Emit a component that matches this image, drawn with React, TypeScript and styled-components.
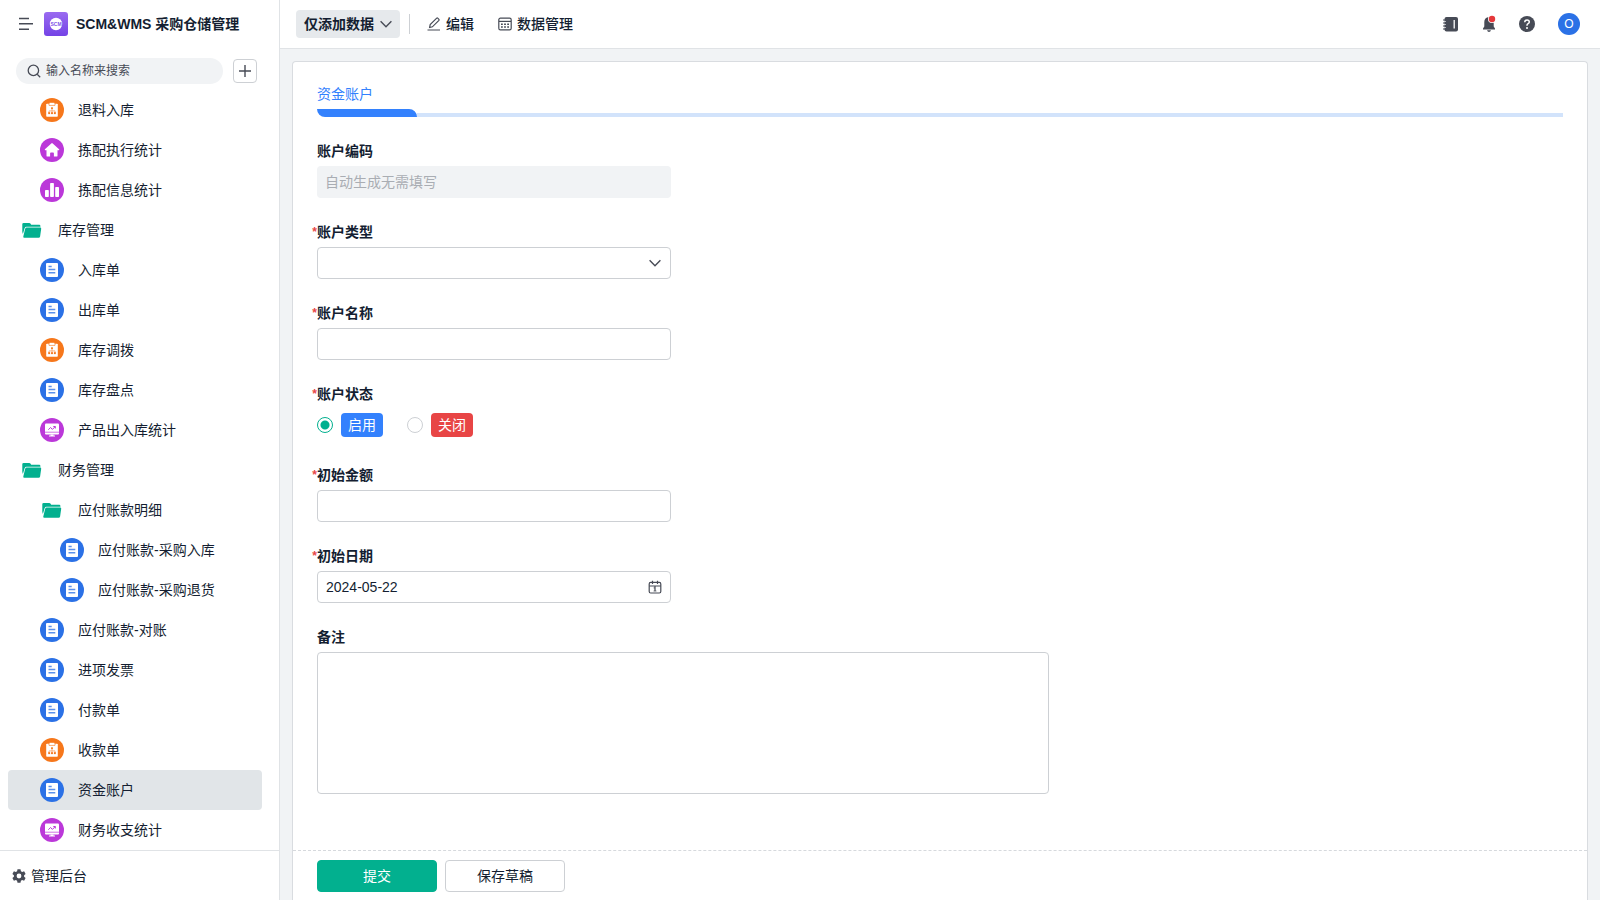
import React from "react";
import styled, { createGlobalStyle } from "styled-components";

const color = {
  text: "#141e31",
  icon: "#474b56",
  line: "#e0e3e6",
  control: "#cdd0d4",
  muted: "#f1f3f5",
  blue: "#3381fd",
  appBlue: "#2b71e6",
  green: "#02b08f",
  orange: "#f6771b",
  purple: "#bb38d9",
  red: "#e84545",
};

const GlobalStyle = createGlobalStyle`
  *, *::before, *::after { box-sizing: border-box; }
  body {
    margin: 0;
    background: ${color.muted};
    color: ${color.text};
    font: 14px/20px "Liberation Sans", "Noto Sans CJK SC", sans-serif;
  }
  button, input, select, textarea { font: inherit; color: inherit; margin: 0; }
  button { padding: 0; border: 0; background: none; cursor: pointer; }
  svg { display: block; flex: none; }
`;

const Page = styled.div`
  display: flex;
  height: 100vh;
`;

const Sidebar = styled.aside`
  display: flex;
  flex-direction: column;
  flex: none;
  width: 280px;
  background: #fff;
  border-right: 1px solid ${color.line};
`;

const Brand = styled.div`
  display: flex;
  align-items: center;
  gap: 8px;
  height: 48px;
  padding-left: 18px;
`;

const MenuButton = styled.button`
  width: 18px;
  height: 18px;
`;

const BrandName = styled.h1`
  margin: 0;
  font-size: 14px;
  font-weight: 600;
  white-space: nowrap;
`;

const SearchRow = styled.div`
  display: flex;
  align-items: center;
  gap: 10px;
  height: 42px;
  padding: 10px 22px 6px 16px;
`;

const SearchBox = styled.label`
  display: flex;
  flex: 1;
  align-items: center;
  gap: 5px;
  height: 26px;
  padding: 0 11px;
  border-radius: 13px;
  background: ${color.muted};
`;

const SearchInput = styled.input`
  flex: 1;
  min-width: 0;
  padding: 0;
  border: 0;
  outline: 0;
  background: none;
  font-size: 12px;
  line-height: 20px;
  &::placeholder { color: ${color.icon}; opacity: 1; }
`;

const AddButton = styled.button`
  display: grid;
  place-items: center;
  width: 24px;
  height: 24px;
  border: 1px solid ${color.control};
  border-radius: 4px;
`;

const Nav = styled.nav`
  flex: 1;
  min-height: 0;
  padding: 0 17px 0 8px;
  overflow-y: auto;
  scrollbar-width: none;
`;

const NavLink = styled.a<{ $level: number; $active?: boolean }>`
  display: flex;
  align-items: center;
  gap: 14px;
  height: 40px;
  padding-left: ${(p) => 12 + p.$level * 20}px;
  border-radius: 4px;
  background: ${(p) => (p.$active ? "#e1e5e8" : "transparent")};
  color: inherit;
  text-decoration: none;
  white-space: nowrap;
`;

const AdminLink = styled.a`
  display: flex;
  align-items: center;
  gap: 5px;
  height: 50px;
  padding-left: 12px;
  border-top: 1px solid ${color.line};
  color: inherit;
  text-decoration: none;
`;

const Content = styled.div`
  display: flex;
  flex: 1;
  flex-direction: column;
  min-width: 0;
`;

const TopBar = styled.header`
  display: flex;
  align-items: center;
  justify-content: space-between;
  height: 49px;
  flex: none;
  padding: 0 20px 0 16px;
  background: #fff;
  border-bottom: 1px solid ${color.line};
`;

const Group = styled.div<{ $gap: number }>`
  display: flex;
  align-items: center;
  gap: ${(p) => p.$gap}px;
`;

const ModeButton = styled.button`
  display: flex;
  align-items: center;
  justify-content: space-between;
  width: 104px;
  height: 28px;
  padding: 0 8px;
  border-radius: 4px;
  background: #e6e9ec;
  font-weight: 600;
`;

const Divider = styled.span`
  width: 1px;
  height: 20px;
  margin: 0 17px 0 9px;
  background: ${color.control};
`;

const ToolButton = styled.button`
  display: flex;
  align-items: center;
  gap: 5px;
  font-weight: 500;
`;

const Avatar = styled.button`
  width: 22px;
  height: 22px;
  border-radius: 50%;
  background: ${color.appBlue};
  color: #fff;
  font-size: 12px;
`;

const Card = styled.form`
  display: flex;
  flex: 1;
  flex-direction: column;
  min-height: 0;
  margin: 12px 12px 0;
  background: #fff;
  border: 1px solid #d9dce0;
  border-bottom: 0;
  border-radius: 4px 4px 0 0;
`;

const CardBody = styled.div`
  flex: 1;
  min-height: 0;
  padding: 20px 24px;
  overflow-y: auto;
`;

const SectionTitle = styled.h2`
  margin: 0 0 3px;
  color: ${color.blue};
  font-size: 14px;
  font-weight: 400;
  line-height: 24px;
`;

const SectionRule = styled.div`
  display: flex;
  align-items: flex-end;
  margin-bottom: 24px;
  &::before {
    content: "";
    width: 100px;
    height: 8px;
    border-radius: 0 8px 0 8px;
    background: ${color.blue};
  }
  &::after {
    content: "";
    flex: 1;
    height: 4px;
    background: #d2e3fb;
  }
`;

const Field = styled.div<{ $wide?: boolean }>`
  max-width: ${(p) => (p.$wide ? 732 : 354)}px;
  margin-bottom: 24px;
`;

const FieldLabel = styled.label<{ $required?: boolean }>`
  position: relative;
  display: block;
  margin-bottom: 4px;
  font-weight: 600;
  line-height: 21px;
  &::before {
    content: ${(p) => (p.$required ? '"*"' : "none")};
    position: absolute;
    right: 100%;
    color: ${color.red};
    font-size: 12px;
  }
`;

const ControlFrame = styled.div`
  display: grid;
  align-items: center;
  & > * { grid-area: 1 / 1; }
`;

const TextInput = styled.input`
  display: block;
  width: 100%;
  height: 32px;
  padding: 0 8px;
  border: 1px solid ${color.control};
  border-radius: 4px;
  background: #fff;
  outline: 0;
  &:disabled {
    border: 0;
    background: ${color.muted};
  }
  &::placeholder { color: #a9adb3; opacity: 1; }
`;

const SelectInput = styled.select`
  width: 100%;
  height: 32px;
  padding: 0 32px 0 8px;
  border: 1px solid ${color.control};
  border-radius: 4px;
  background: #fff;
  appearance: none;
`;

const TrailingIcon = styled.span`
  display: grid;
  place-items: center;
  justify-self: end;
  width: 16px;
  margin-right: 8px;
  pointer-events: none;
`;

const TextArea = styled.textarea`
  display: block;
  width: 100%;
  height: 142px;
  padding: 6px 8px;
  border: 1px solid ${color.control};
  border-radius: 4px;
  outline: 0;
  resize: none;
`;

const RadioRow = styled.div`
  display: flex;
  align-items: center;
  gap: 24px;
  height: 32px;
`;

const RadioOption = styled.label`
  display: flex;
  align-items: center;
  gap: 8px;
`;

const Radio = styled.input`
  appearance: none;
  width: 16px;
  height: 16px;
  border: 1px solid ${color.control};
  border-radius: 50%;
  &:checked {
    border-color: ${color.green};
    background: radial-gradient(circle, ${color.green} 4px, #fff 5px);
  }
`;

const Tag = styled.span<{ $color: string }>`
  padding: 0 7px;
  border-radius: 4px;
  background: ${(p) => p.$color};
  color: #fff;
  line-height: 24px;
`;

const Actions = styled.footer`
  display: flex;
  flex: none;
  gap: 8px;
  padding: 9px 24px 8px;
  border-top: 1px dashed #d6d9dd;
`;

const ActionButton = styled.button<{ $primary?: boolean }>`
  width: 120px;
  height: 32px;
  border: 1px solid ${(p) => (p.$primary ? color.green : color.control)};
  border-radius: 4px;
  background: ${(p) => (p.$primary ? color.green : "#fff")};
  color: ${(p) => (p.$primary ? "#fff" : color.text)};
`;

type IconName = "folder" | "doc" | "flow" | "home" | "bars" | "board";

const shapes: Record<IconName, React.ReactNode> = {
  folder: (
    <g fill={color.green}>
      <path d="M2.300 6.300q0-1.300 1.300-1.300H9.300q.7 0 1.100.6l.8 1.200h8q1.200 0 1.200 1.200v.8H6.500q-1.500 0-1.900 1.400L2.900 16l-.6-2z" />
      <path d="M6.700 9.600h13.400q1.300 0 1.100 1.200l-1.100 7.700q-.2 1.200-1.500 1.200H4.300q-1.300 0-1-1.200l1.800-7.600q.3-1.300 1.600-1.300z" />
    </g>
  ),
  doc: (
    <>
      <circle cx="12" cy="12" r="12" fill={color.appBlue} />
      <rect x="6" y="5" width="12" height="14" rx="1" fill="#fff" />
      <path d="M8.500 8.500h3.200M8.500 11.600h6.800M8.500 14.800h6.800" stroke="#5a91ec" strokeWidth="1.500" />
    </>
  ),
  flow: (
    <>
      <circle cx="12" cy="12" r="12" fill={color.orange} />
      <rect x="6.200" y="5.800" width="11.600" height="12.900" rx=".8" fill="#fff" />
      <path d="M9 5.600v1.700h6V5.600" fill="none" stroke={color.orange} strokeWidth=".7" />
      <rect x="9.600" y="4.800" width="4.800" height="1.900" fill="#fff" />
      <path d="M12 10.300v4.500M9 15v-2.100h6V15" fill="none" stroke="#f9a468" strokeWidth=".8" />
      <g fill={color.orange}>
        <rect x="11.100" y="9.300" width="1.800" height="1.800" />
        <rect x="8.200" y="14.200" width="1.900" height="1.900" />
        <rect x="11.050" y="14.200" width="1.900" height="1.900" />
        <rect x="13.900" y="14.200" width="1.900" height="1.900" />
      </g>
    </>
  ),
  home: (
    <>
      <circle cx="12" cy="12" r="12" fill={color.purple} />
      <path
        d="M11.300 5.400q.7-.6 1.400 0l6.400 5.900q.5.900-.5 1h-1.100v5.400q0 .9-.9.9h-2.700v-3.200q0-.8-.8-.8h-2.200q-.8 0-.8.8v3.200H7.400q-.9 0-.9-.9v-5.400H5.400q-1-.1-.5-1z"
        fill="#fff"
      />
    </>
  ),
  bars: (
    <>
      <circle cx="12" cy="12" r="12" fill={color.purple} />
      <g fill="#fff">
        <rect x="5" y="12" width="3.800" height="7" rx=".8" />
        <rect x="10.100" y="5" width="3.800" height="14" rx=".8" />
        <rect x="15.200" y="9" width="3.800" height="10" rx=".8" />
      </g>
    </>
  ),
  board: (
    <>
      <circle cx="12" cy="12" r="12" fill={color.purple} />
      <rect x="5" y="5.500" width="14" height="11" rx="1" fill="#fff" />
      <path d="M10.500 16.500h3v1H15v1H9v-1h1.500z" fill="#fff" />
      <path d="M5 14.200h14" stroke={color.purple} strokeWidth=".7" />
      <path d="M8.300 11.700 10.600 9.500l1.800 1.900 2.800-2.800M13.300 8.500h2v2" fill="none" stroke={color.purple} strokeWidth="1" />
    </>
  ),
};

const NavIcon = ({ name }: { name: IconName }) => (
  <svg width="24" height="24" viewBox="0 0 24 24" aria-hidden="true">
    {shapes[name]}
  </svg>
);

const Chevron = () => (
  <svg width="12" height="12" viewBox="0 0 12 12" fill="none" stroke={color.icon} strokeWidth="1.400" aria-hidden="true">
    <path d="M.6 3.300 6 8.700l5.400-5.400" />
  </svg>
);

const items: { label: string; icon: IconName; level: number; active?: boolean }[] = [
  { label: "退料入库", icon: "flow", level: 1 },
  { label: "拣配执行统计", icon: "home", level: 1 },
  { label: "拣配信息统计", icon: "bars", level: 1 },
  { label: "库存管理", icon: "folder", level: 0 },
  { label: "入库单", icon: "doc", level: 1 },
  { label: "出库单", icon: "doc", level: 1 },
  { label: "库存调拨", icon: "flow", level: 1 },
  { label: "库存盘点", icon: "doc", level: 1 },
  { label: "产品出入库统计", icon: "board", level: 1 },
  { label: "财务管理", icon: "folder", level: 0 },
  { label: "应付账款明细", icon: "folder", level: 1 },
  { label: "应付账款-采购入库", icon: "doc", level: 2 },
  { label: "应付账款-采购退货", icon: "doc", level: 2 },
  { label: "应付账款-对账", icon: "doc", level: 1 },
  { label: "进项发票", icon: "doc", level: 1 },
  { label: "付款单", icon: "doc", level: 1 },
  { label: "收款单", icon: "flow", level: 1 },
  { label: "资金账户", icon: "doc", level: 1, active: true },
  { label: "财务收支统计", icon: "board", level: 1 },
];

export default function App() {
  return (
    <Page>
      <GlobalStyle />
      <Sidebar>
        <Brand>
          <MenuButton type="button" aria-label="收起菜单">
            <svg width="18" height="18" viewBox="0 0 18 18" stroke={color.icon} strokeWidth="1.500">
              <path d="M1 3.500h10M1 8.700h14M1 14.200h10" />
            </svg>
          </MenuButton>
          <svg width="24" height="24" viewBox="0 0 24 24" aria-hidden="true">
            <defs>
              <linearGradient id="brand" x1="0" y1="0" x2="0" y2="1">
                <stop offset="0" stopColor="#9a6bf0" />
                <stop offset="1" stopColor="#7443e6" />
              </linearGradient>
            </defs>
            <rect width="24" height="24" rx="3" fill="url(#brand)" />
            <circle cx="12" cy="12" r="6.200" fill="#fff" />
            <text x="12" y="13.800" textAnchor="middle" fontSize="5" fontWeight="700" fill="#7f52e8">
              SCM
            </text>
          </svg>
          <BrandName>SCM&amp;WMS 采购仓储管理</BrandName>
        </Brand>
        <SearchRow>
          <SearchBox>
            <svg width="14" height="14" viewBox="0 0 14 14" fill="none" stroke={color.icon} strokeWidth="1.300">
              <circle cx="6.400" cy="6.400" r="5.200" />
              <path d="m10.200 10.200 3 3" />
            </svg>
            <SearchInput type="text" aria-label="搜索" placeholder="输入名称来搜索" />
          </SearchBox>
          <AddButton type="button" aria-label="新建">
            <svg width="12" height="12" viewBox="0 0 12 12" stroke={color.icon} strokeWidth="1.400">
              <path d="M6 0v12M0 6h12" />
            </svg>
          </AddButton>
        </SearchRow>
        <Nav>
          {items.map((item) => (
            <NavLink
              key={item.label}
              href="#"
              $level={item.level}
              $active={item.active}
              aria-current={item.active ? "page" : undefined}
            >
              <NavIcon name={item.icon} />
              {item.label}
            </NavLink>
          ))}
        </Nav>
        <AdminLink href="#">
          <svg width="14" height="14" viewBox="0 0 14 14" aria-hidden="true">
            <path
              fillRule="evenodd"
              fill={color.icon}
              d="M5.500.3h3l.4 1.900 1.300.8 1.900-.7 1.500 2.600-1.500 1.300v1.600l1.500 1.300-1.500 2.600-1.900-.7-1.300.8-.4 1.900h-3l-.4-1.900-1.300-.8-1.900.7L.4 9.100l1.500-1.300V6.200L.4 4.900l1.500-2.600 1.900.7 1.300-.8zM7 4.600a2.400 2.400 0 1 0 0 4.800 2.400 2.400 0 0 0 0-4.800z"
            />
          </svg>
          管理后台
        </AdminLink>
      </Sidebar>

      <Content>
        <TopBar>
          <Group $gap={0}>
            <ModeButton type="button">
              仅添加数据
              <Chevron />
            </ModeButton>
            <Divider />
            <Group $gap={24}>
              <ToolButton type="button">
                <svg width="14" height="14" viewBox="0 0 14 14" fill="none" stroke={color.icon} strokeWidth="1.200">
                  <path d="M.5 13h12.500M2.600 10.500l.6-2.900 6.500-6.500q.5-.4 1 0l1.200 1.200q.4.500 0 1L5.400 9.800z" />
                </svg>
                编辑
              </ToolButton>
              <ToolButton type="button">
                <svg width="14" height="14" viewBox="0 0 14 14" fill="none" stroke={color.icon} strokeWidth="1.200">
                  <rect x=".8" y="1.200" width="12.400" height="11.600" rx="1.600" />
                  <path d="M1 4.400h12" />
                  <path d="M3 7.200h8M3 10h8" strokeWidth="1.600" strokeDasharray="1.800 1.300" />
                </svg>
                数据管理
              </ToolButton>
            </Group>
          </Group>
          <Group $gap={22}>
            <Group $gap={20}>
              <button type="button" aria-label="通讯录">
                <svg width="18" height="18" viewBox="0 0 18 18">
                  <rect x="2.500" y="2" width="13.500" height="14.500" rx="2" fill={color.icon} />
                  <path d="M1 5h3M1 8h3M1 11h3M1 14h3" stroke={color.icon} strokeWidth="1" />
                  <path d="M2.400 6.500h1.400M2.400 9.500h1.400M2.400 12.500h1.400" stroke="#fff" strokeWidth=".8" />
                  <path d="M12.200 5v8.500" stroke="#fff" strokeWidth="1.300" />
                </svg>
              </button>
              <button type="button" aria-label="通知">
                <svg width="18" height="18" viewBox="0 0 18 18">
                  <path
                    d="M9 2q4.700.6 4.700 5v4.600l1.300 1.800v1.200H3v-1.200l1.300-1.800V7Q4.300 2.600 9 2zM7 15.200h4q-.5 1.800-2 1.800t-2-1.800z"
                    fill={color.icon}
                  />
                  <circle cx="12" cy="4" r="4" fill="#fff" />
                  <circle cx="12" cy="4" r="3.200" fill="#e5383b" />
                </svg>
              </button>
              <button type="button" aria-label="帮助">
                <svg width="18" height="18" viewBox="0 0 18 18">
                  <circle cx="9" cy="9" r="8" fill={color.icon} />
                  <path d="M6.700 7.200q.1-2.300 2.300-2.300t2.300 2.100q0 1-1.200 1.700T9 10.700" fill="none" stroke="#fff" strokeWidth="1.500" />
                  <circle cx="9" cy="13" r="1" fill="#fff" />
                </svg>
              </button>
            </Group>
            <Avatar type="button">O</Avatar>
          </Group>
        </TopBar>

        <Card onSubmit={(e) => e.preventDefault()}>
          <CardBody>
            <SectionTitle>资金账户</SectionTitle>
            <SectionRule />
            <Field>
              <FieldLabel htmlFor="code">账户编码</FieldLabel>
              <TextInput id="code" disabled placeholder="自动生成无需填写" />
            </Field>
            <Field>
              <FieldLabel htmlFor="type" $required>账户类型</FieldLabel>
              <ControlFrame>
                <SelectInput id="type" defaultValue="">
                  <option value="" />
                </SelectInput>
                <TrailingIcon>
                  <Chevron />
                </TrailingIcon>
              </ControlFrame>
            </Field>
            <Field>
              <FieldLabel htmlFor="name" $required>账户名称</FieldLabel>
              <TextInput id="name" />
            </Field>
            <Field role="radiogroup" aria-labelledby="status">
              <FieldLabel as="div" id="status" $required>账户状态</FieldLabel>
              <RadioRow>
                <RadioOption>
                  <Radio type="radio" name="status" defaultChecked />
                  <Tag $color={color.blue}>启用</Tag>
                </RadioOption>
                <RadioOption>
                  <Radio type="radio" name="status" />
                  <Tag $color={color.red}>关闭</Tag>
                </RadioOption>
              </RadioRow>
            </Field>
            <Field>
              <FieldLabel htmlFor="amount" $required>初始金额</FieldLabel>
              <TextInput id="amount" />
            </Field>
            <Field>
              <FieldLabel htmlFor="date" $required>初始日期</FieldLabel>
              <ControlFrame>
                <TextInput id="date" defaultValue="2024-05-22" />
                <TrailingIcon>
                  <svg width="14" height="14" viewBox="0 0 14 14" fill="none" stroke={color.icon} strokeWidth="1.200">
                    <rect x="1.200" y="2.400" width="11.600" height="10.600" rx="1.500" />
                    <path d="M1.200 6h11.600M4.500.8V4M9.500.8V4M7 6v5" />
                    <path d="M5.600 11h2.800M5.600 7.900H7" strokeWidth=".8" />
                  </svg>
                </TrailingIcon>
              </ControlFrame>
            </Field>
            <Field $wide>
              <FieldLabel htmlFor="remark">备注</FieldLabel>
              <TextArea id="remark" />
            </Field>
          </CardBody>
          <Actions>
            <ActionButton type="submit" $primary>提交</ActionButton>
            <ActionButton type="button">保存草稿</ActionButton>
          </Actions>
        </Card>
      </Content>
    </Page>
  );
}
